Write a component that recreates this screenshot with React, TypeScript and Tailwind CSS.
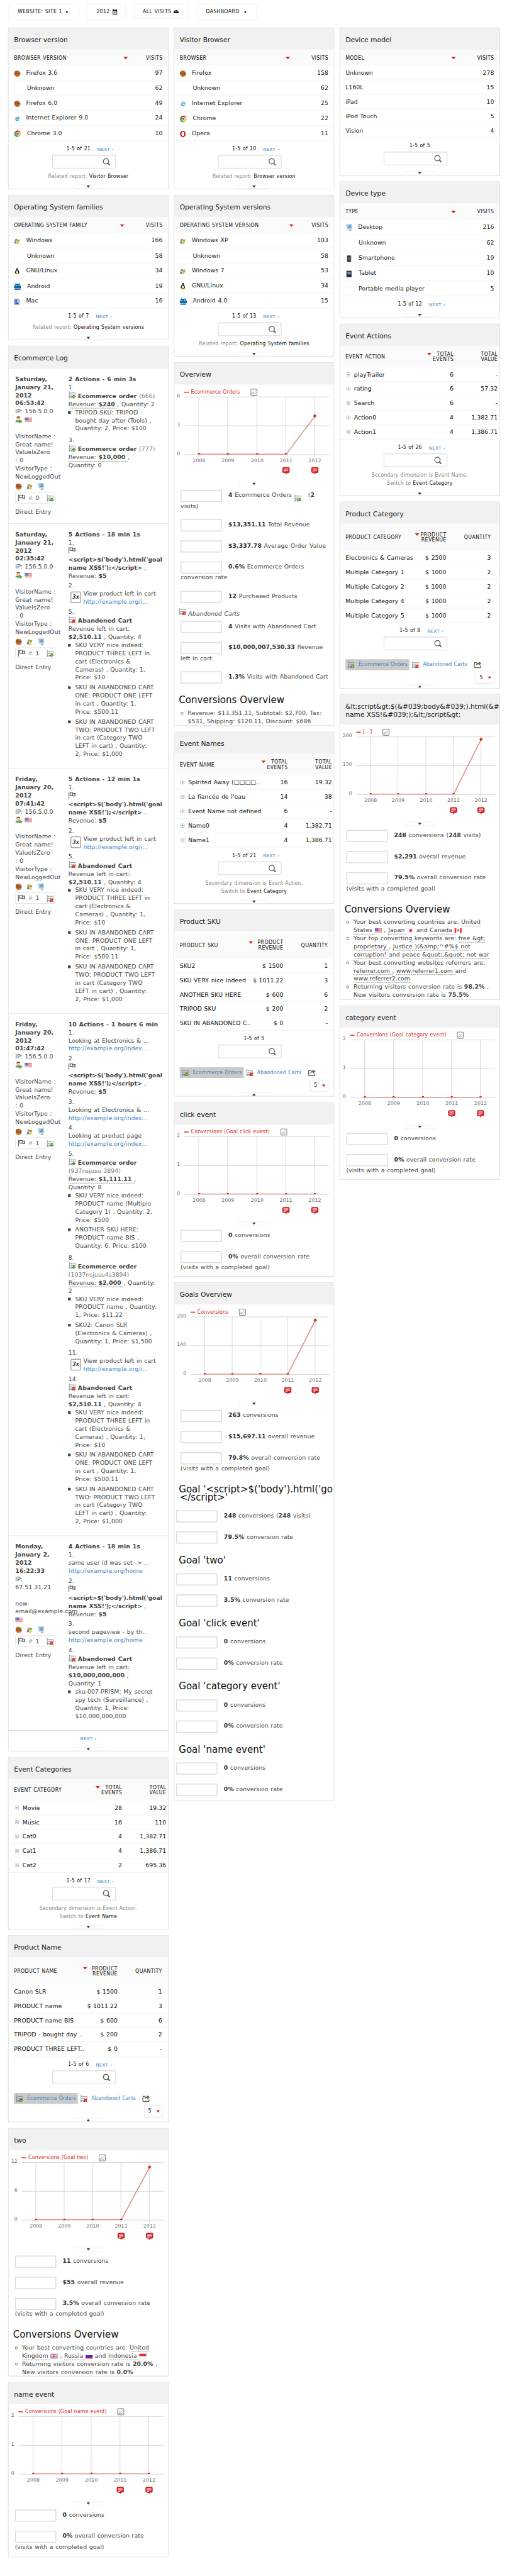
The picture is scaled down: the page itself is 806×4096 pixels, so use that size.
import React, { type ReactNode } from 'react';

/* ---------- small pictures ---------- */

type IconProps = { className?: string };

const Firefox = () => (
  <svg width="15" height="15" viewBox="0 0 16 16">
    <circle cx="8" cy="8" r="7.6" fill="#e0761c" />
    <path d="M8 .6a7.4 7.4 0 0 1 7.3 7c-1.600-3-3-4-5-4.500z" fill="#f7c04a" />
    <circle cx="8.200" cy="7" r="4.800" fill="#2f5f9e" />
    <path d="M6 3c2-1 4 .5 4 2.500-1 .5-2 0-3 1s0 2 1.500 2.300c2 .3 3-1 4.500-.8-1 4-6 5-8.500 2.500C2.500 8.500 3.500 5 6 3z" fill="#c65a12" />
    <path d="M8.500 3c1.500.5 2.500 1.500 2.700 3L9 6.500z" fill="#7fb6e6" />
    <path d="M1 6c.3-2 1.200-3.500 2-4.500.2 1 .5 1.500 1.500 2C3 5 3 8 4.500 10.500 2.500 10.200 1.300 8.500 1 6z" fill="#b5430f" />
  </svg>
);

const Explorer = () => (
  <svg width="15" height="15" viewBox="0 0 16 16">
    <path d="M8 3.300a5 5 0 1 0 4.800 6.700H10a2.400 2.400 0 0 1-4.300-1.200H13A5 5 0 0 0 8 3.300zM5.700 7.200a2.400 2.400 0 0 1 4.600 0z" fill="#35a8e8" />
    <path d="M2.500 15C.6 13.500 3.500 7 8 3.500 11 1.200 14 .4 14.500 1.800c.3.800 0 1.800-.5 2.800" fill="none" stroke="#f0c040" strokeWidth="1.100" />
  </svg>
);

const Chrome = () => (
  <svg width="16" height="16" viewBox="0 0 16 16">
    <path d="M8 8L1.500 4.300A7.500 7.500 0 0 1 14.500 4.300z" fill="#dd3a2c" />
    <path d="M8 8L14.500 4.300A7.500 7.500 0 0 1 8 15.500z" fill="#fbcf2b" />
    <path d="M8 8v7.500A7.500 7.500 0 0 1 1.500 4.300z" fill="#3aa648" />
    <path d="M8 4.500h6.600L8 8z" fill="#fbcf2b" />
    <circle cx="8" cy="8" r="3.700" fill="#fff" />
    <circle cx="8" cy="8" r="2.900" fill="#4a82d8" />
  </svg>
);

const Opera = () => (
  <svg width="14" height="15" viewBox="0 0 14 15">
    <ellipse cx="7" cy="7.500" rx="4.700" ry="5.600" fill="none" stroke="#c4161c" strokeWidth="3" />
    <ellipse cx="7" cy="7.500" rx="1.900" ry="4.800" fill="#fff" />
  </svg>
);

const Windows = () => (
  <svg width="14" height="14" viewBox="0 0 14 14">
    <path d="M3 2.200C4.500 1.200 6 1.400 7.300 2L6 6.800c-1.400-.6-2.900-.8-4.500 0z" fill="#d9703a" />
    <path d="M8.200 2.400c1.500.7 3 .8 4.800 0l-1.400 4.800c-1.600.8-3.200.7-4.700 0z" fill="#7fb43c" />
    <path d="M1.300 7.600c1.600-.8 3-.6 4.500 0l-1.400 4.700C3 11.700 1.600 11.500 0 12.300z" fill="#4a83c6" />
    <path d="M6.700 8c1.500.7 3 .8 4.700 0l-1.300 4.700c-1.700.8-3.200.7-4.700 0z" fill="#f0b92e" />
  </svg>
);

const Linux = () => (
  <svg width="14" height="15" viewBox="0 0 14 15">
    <path d="M7 .5c1.700 0 2.200 1.300 2.200 3 0 2 2.800 4 2.800 8L10 14H4L2 11.500c0-4 2.800-6 2.800-8 0-1.700.5-3 2.200-3z" fill="#111" />
    <path d="M7 5c1.300 1.500 2.400 3.800 2.200 7.500H4.800C4.600 8.800 5.700 6.500 7 5z" fill="#fff" />
    <path d="M5.800 3.600h2.400L7 5z" fill="#f5b921" />
    <path d="M1 12.500l2.500-1.800L5.500 14l-2 .8zM13 12.500l-2.500-1.800L8.500 14l2 .8z" fill="#f5b921" />
  </svg>
);

const Android = () => (
  <svg width="16" height="16" viewBox="0 0 16 16" fill="#0a6aa8">
    <path d="M3.500 0l1.500 2.300h6L12.500 0l.7.400-1.200 2.200C13.500 3.500 14.300 5 14.500 6.500H16V12h-1.500v4h-13v-4H0V6.500h1.500C1.700 5 2.500 3.500 4 2.600L2.800.4z" />
    <circle cx="5" cy="6" r="1.200" fill="#fff" />
    <circle cx="11" cy="6" r="1.200" fill="#fff" />
    <path d="M1.500 12.500h13v.8h-13z" fill="#fff" />
  </svg>
);

const Mac = () => (
  <svg width="14" height="14" viewBox="0 0 14 14">
    <path d="M0 0h14v14H0z" fill="#6f9bd8" />
    <path d="M8 0h6v14H8.500C7 11 7 9 7 8h-2C5.500 5 6.500 2 8 0z" fill="#bcd3f2" />
    <path d="M8.500 0C6.500 2.500 6 5 5.500 8H8c0 2 0 4 1 6M2.500 9.500c2.500 2.300 6.500 2.300 9 0M3.500 4v1.500M10.500 4v1.500" fill="none" stroke="#1d2f57" strokeWidth="1" />
  </svg>
);

const Desktop = () => (
  <svg width="16" height="18" viewBox="0 0 16 18">
    <path d="M1.500 1.500L13.500 0.800l1.200 9.200-10.500 2z" fill="#cfd6dc" stroke="#a9b2ba" strokeWidth=".7" />
    <path d="M3 3l9.300-.6.900 6.600-8.600 1.500z" fill="#5aa7e0" />
    <path d="M3 3l5-.3-3.400 7.600z" fill="#9fd0f4" />
    <path d="M8 12l5-1 1 3.500-4 2.500-3-1.500z" fill="#b9bfc5" />
  </svg>
);

const Phone = () => (
  <svg width="16" height="17" viewBox="0 0 16 17">
    <rect x="3" y=".5" width="10" height="16" rx="2" fill="#a8a8a8" />
    <rect x="4.200" y="1.800" width="7.600" height="13.400" rx="1" fill="#222" />
    <rect x="5.200" y="4" width="5.600" height="7.500" fill="#55606c" />
    <circle cx="8" cy="13.400" r="1" fill="#999" />
  </svg>
);

const Tablet = () => (
  <svg width="16" height="17" viewBox="0 0 16 17">
    <rect x="1.500" y=".5" width="13" height="16" rx="1.500" fill="#a9a9a9" />
    <rect x="3" y="2" width="10" height="12.500" fill="#1d222a" />
    <rect x="4.500" y="3.500" width="7" height="6" fill="#7d93b4" />
    <circle cx="8" cy="15.300" r=".8" fill="#fff" />
  </svg>
);

const Cart = ({ kind }: { kind: 'add' | 'drop' }) => (
  <svg width="16" height="16" viewBox="0 0 16 16" className="inline-block shrink-0">
    <path d="M.5.500h1.500v11M2 3.500h13.500l-1 5H2M1 12h10" fill="none" stroke="#7e8796" strokeWidth="1.100" />
    <path d="M4 5h9M4 7h8" stroke="#a9b2c2" strokeWidth="1" strokeDasharray="1 1" />
    <circle cx="2.500" cy="14" r="1.100" fill="none" stroke="#4a5467" />
    <circle cx="7.500" cy="14" r="1.100" fill="none" stroke="#4a5467" />
    {kind === 'add' ? (
      <>
        <path d="M10.400 8h3v2.400h2.400v3h-2.400v2.400h-3v-2.400H8v-3h2.400z" fill="#17620c" />
        <path d="M11.300 9h1.200v2.300h2.300v1.200h-2.300v2.300h-1.200v-2.300H9v-1.200h2.300z" fill="#c5ee1a" />
      </>
    ) : (
      <>
        <path d="M9 8l3 1.200L15 8l.8 1.500-1.300 2.500 1.300 2.500L15 16l-3-1.200L9 16l-.8-1.500L9.500 12 8.200 9.500z" fill="#c81e0e" />
        <path d="M9.800 9.500l4.600 5M14.400 9.500l-4.600 5" stroke="#ff7a4a" strokeWidth="1.300" />
      </>
    )}
  </svg>
);

const Returning = () => (
  <svg width="16" height="16" viewBox="0 0 16 16">
    <path d="M0 13.500C0 10 2 8.500 6 8.500s6 1.500 6 5z" fill="#6f8fae" />
    <path d="M4.500 8.500L6 12l1.500-3.500z" fill="#fff" />
    <circle cx="6.500" cy="4.800" r="3.800" fill="#f2c595" />
    <path d="M2.500 5C2 1 5 .3 7 .5c3 .2 4 2.500 3.300 5C9 3.500 6 3 4 3.500z" fill="#8a5426" />
    <path d="M5 10.500h5V8l5.500 4-5.500 4v-2.500H5z" fill="#63b53b" stroke="#3b8424" strokeWidth=".7" />
  </svg>
);

type Country = 'us' | 'jp' | 'ca' | 'uk' | 'ru' | 'id';

const Flag = ({ of }: { of: Country }) => (
  <svg width="16" height="11" viewBox="0 0 16 11" className="inline-block">
    <rect width="16" height="11" fill="#fff" />
    {of === 'us' && (
      <>
        <path d="M0 1h16M0 3h16M0 5h16M0 7h16M0 9h16" stroke="#e85a52" strokeWidth="1.100" />
        <rect width="8" height="6" fill="#4369c4" />
        <path d="M1 1.500h6M1 3h6M1 4.500h6" stroke="#fff" strokeWidth=".6" strokeDasharray="1 1" />
      </>
    )}
    {of === 'jp' && <circle cx="8" cy="5.500" r="3.200" fill="#e8202a" />}
    {of === 'ca' && (
      <>
        <path d="M0 0h4v11H0zM12 0h4v11h-4z" fill="#e2383c" />
        <path d="M8 2l1 1.500 1.500-.3-.5 2.300-1.500 1.300L8 9l-.5-2.200L6 5.500l-.5-2.300 1.500.3z" fill="#e2383c" />
      </>
    )}
    {of === 'uk' && (
      <>
        <rect width="16" height="11" fill="#4a62b4" />
        <path d="M0 0l16 11M16 0L0 11" stroke="#fff" strokeWidth="2" />
        <path d="M0 0l16 11M16 0L0 11" stroke="#e04048" strokeWidth=".7" />
        <path d="M8 0v11M0 5.500h16" stroke="#fff" strokeWidth="4" />
        <path d="M8 0v11M0 5.500h16" stroke="#e04048" strokeWidth="2" />
      </>
    )}
    {of === 'ru' && (
      <>
        <path d="M0 3.500h16v4H0z" fill="#1526e0" />
        <path d="M0 7.500h16V11H0z" fill="#e02020" />
      </>
    )}
    {of === 'id' && <path d="M0 0h16v5.500H0z" fill="#e03038" />}
    <rect x=".4" y=".4" width="15.200" height="10.200" fill="none" stroke="#00000026" strokeWidth=".8" />
  </svg>
);

const GoalFlag = () => (
  <svg width="16" height="15" viewBox="0 0 16 15" className="block">
    <path d="M1 0v15" stroke="#5e5e5e" strokeWidth="1.600" />
    <path d="M3.500 1.500h6v6h-6zM9.500 3h6l-1.700 2.700 1.700 2.800H9.500" fill="none" stroke="#5e5e5e" strokeWidth="1.700" />
  </svg>
);

const Lens = () => (
  <svg width="17" height="17" viewBox="0 0 17 17">
    <circle cx="7.300" cy="7.300" r="5.900" fill="none" stroke="#666" strokeWidth="2" />
    <path d="M11 11l5 5" stroke="#666" strokeWidth="3" />
  </svg>
);

const Share = () => (
  <svg width="17" height="15" viewBox="0 0 17 15">
    <path d="M7 2.500H3A1.800 1.800 0 0 0 1.200 4.300V12A1.800 1.800 0 0 0 3 13.800h10a1.800 1.800 0 0 0 1.800-1.800V9.500" fill="none" stroke="#666" strokeWidth="2.200" />
    <path d="M11 0l6 4.500L11 9V6.300C8 6.300 6.300 7.500 5 10c0-4.500 2.500-7.300 6-7.500z" fill="#666" />
  </svg>
);

const Expand = () => (
  <svg width="9" height="9" viewBox="0 0 9 9">
    <rect x=".5" y=".5" width="8" height="8" rx="1.300" fill="none" stroke="#a0a0a0" />
    <path d="M2 4.500h5M4.500 2v5" stroke="#8a8a8a" />
  </svg>
);

const Caret = ({ className = '' }: IconProps) => (
  <svg width="5" height="5" viewBox="0 0 5 5" className={className}>
    <path d="M0 0h5L2.500 5z" fill="#111" />
  </svg>
);

const Sort = () => (
  <svg width="10" height="6" viewBox="0 0 10 6" className="shrink-0">
    <path d="M0 0h10L5 6z" fill="#d4291f" />
  </svg>
);

const icons = {
  firefox: Firefox,
  explorer: Explorer,
  chrome: Chrome,
  opera: Opera,
  windows: Windows,
  linux: Linux,
  android: Android,
  mac: Mac,
  desktop: Desktop,
  phone: Phone,
  tablet: Tablet,
  none: () => null,
};
type IconName = keyof typeof icons;

/* ---------- building blocks ---------- */

const smallText = 'text-[11px] tracking-[0.18px] [word-spacing:0.6px]';
const capsText = 'text-[11px] tracking-[0.46px] [word-spacing:0.8px] uppercase';

function Card({ title, className, titleHeight = 'h-[48px]', children }: { title: ReactNode; className: string; titleHeight?: string; children: ReactNode }) {
  return (
    <section className={`${className} flex w-[356px] shrink-0 flex-col overflow-hidden border border-[#d9d9d9] bg-white shadow-[0_1px_2px_rgba(0,0,0,0.08)]`}>
      <h2 className={`${titleHeight} flex shrink-0 items-center whitespace-pre bg-[#f1f1f1] pt-[4px] pl-[12px] text-[15px] leading-[18px] tracking-[-0.06px] text-[#1a1a1a] [word-spacing:0px]`}>{title}</h2>
      {children}
    </section>
  );
}

function Tab({ up = false }: { up?: boolean }) {
  return (
    <div className="mx-auto flex h-[9px] w-[70px] shrink-0 items-center justify-center rounded-[2px] border border-[#efefef]">
      <svg width="8" height="5" viewBox="0 0 8 5">
        <path d={up ? 'M0 5h8L4 0z' : 'M0 0h8L4 5z'} fill="#333" />
      </svg>
    </div>
  );
}

function Pager({ label, next = true }: { label: string; next?: boolean }) {
  return (
    <div className={`${next ? 'pl-[8px]' : ''} flex h-[14px] shrink-0 items-center justify-center text-[11px] tracking-[0.3px] text-[#0d0d0d]`}>
      <span>{label}</span>
      {next && <span className="ml-[15px] text-[10px] tracking-[0.3px] text-[#3b83c6]">NEXT ›</span>}
    </div>
  );
}

function Search() {
  return (
    <div className="mt-[6px] ml-[97px] flex h-[30px] w-[141px] shrink-0 items-center justify-end rounded-[2px] border border-[#ccc] pr-[11px] shadow-[inset_0_1px_2px_rgba(0,0,0,0.09)]">
      <Lens />
    </div>
  );
}

function Related({ to }: { to: string }) {
  return (
    <p className="h-[18px] shrink-0 text-center text-[11px] leading-[18px] tracking-[0.25px] text-[#808080] [word-spacing:0.6px]">
      Related report: <span className="text-[#0d0d0d]">{to}</span>
    </p>
  );
}

function Secondary({ dim, to }: { dim: string; to: string }) {
  return (
    <p className={`${smallText} mt-[10px] mb-[9px] h-[36px] shrink-0 text-center leading-[18px] text-[#808080]`}>
      Secondary dimension is {dim}.
      <br />
      Switch to <span className="text-[#0d0d0d]">{to}</span>
    </p>
  );
}

type VisitRow = { icon?: IconName; label: string; value: string; h: string; gap?: string };

function VisitTable({ head, sortCell, rows }: { head: string; sortCell: string; rows: VisitRow[] }) {
  return (
    <>
      <div className={`${capsText} flex h-[36px] shrink-0 items-center bg-[#fafafa] pt-[2px] pr-[12px] pl-[12px] text-[#0d0d0d]`}>
        <span className="flex-1">{head}</span>
        <Sort />
        <span className={`${sortCell} text-right`}>Visits</span>
      </div>
      {rows.map((r) => {
        const Icon = r.icon ? icons[r.icon] : null;
        return (
          <div key={r.label} className={`${r.h} flex shrink-0 items-center border-b border-[#efefef] px-[12px] text-[13px] text-[#1a1a1a]`}>
            {Icon && (
              <span className={`${r.gap ?? 'w-[27px]'} shrink-0 pt-[3px]`}>
                <Icon />
              </span>
            )}
            <span className="flex-1">{r.label}</span>
            <span>{r.value}</span>
          </div>
        );
      })}
    </>
  );
}

type PairRow = [string, string, string];

function EventTable({ head, rows }: { head: string; rows: PairRow[] }) {
  return (
    <>
      <div className={`${capsText} flex h-[48px] shrink-0 items-center bg-[#fafafa] pt-[2px] pr-[4px] pl-[12px] leading-[12px] text-[#0d0d0d]`}>
        <span className="flex-1">{head}</span>
        <span className="-mt-[14px]"><Sort /></span>
        <span className="w-[49px] text-right">Total<br />Events</span>
        <span className="w-[98px] text-right">Total<br />Value</span>
      </div>
      {rows.map(([label, a, b]) => (
        <div key={label} className="flex h-[32px] shrink-0 items-center border-b border-[#efefef] pr-[4px] pl-[14px] text-[13px] text-[#0d0d0d]">
          <span className="w-[17px] shrink-0"><Expand /></span>
          <span className="min-w-0 flex-1 whitespace-nowrap">{label}</span>
          <span className="w-[49px] text-right">{a}</span>
          <span className="w-[98px] text-right">{b}</span>
        </div>
      ))}
    </>
  );
}

function ProductTable({ head, narrow = false, rows }: { head: string; narrow?: boolean; rows: PairRow[] }) {
  const pad = narrow ? 'pr-[19px]' : 'pr-[13px]';
  return (
    <>
      <div className={`${capsText} ${pad} flex h-[60px] shrink-0 items-center bg-[#fafafa] pt-[2px] pl-[12px] leading-[12px] text-[#0d0d0d]`}>
        <span className="flex-1 whitespace-nowrap">{head}</span>
        <span className="-mt-[14px]"><Sort /></span>
        <span className={`${narrow ? 'w-[60px]' : 'w-[67px]'} text-right`}>Product<br />Revenue</span>
        <span className="w-[99px] text-right">Quantity</span>
      </div>
      {rows.map(([label, a, b]) => (
        <div key={label} className={`${pad} flex h-[32px] shrink-0 items-center border-b border-[#efefef] pl-[12px] text-[13px] text-[#0d0d0d]`}>
          <span className="min-w-0 flex-1 whitespace-nowrap">{label}</span>
          <span className="text-right whitespace-nowrap">{a}</span>
          <span className="w-[99px] text-right">{b}</span>
        </div>
      ))}
    </>
  );
}

function ProductFooter({ label, next }: { label: string; next?: boolean }) {
  return (
    <>
      <div className="h-[11px] shrink-0" />
      <Pager label={label} next={next} />
      <Search />
      <div className={`${smallText} mt-[20px] ml-[12px] flex h-[24px] shrink-0 items-center whitespace-nowrap text-[#3b83c6]`}>
        <span className="flex h-[24px] w-[142px] items-center gap-[9px] rounded-[2px] bg-[#cacaca] pl-[4px]"><Cart kind="add" />Ecommerce Orders</span>
        <span className="flex w-[137px] items-center gap-[9px] pl-[5px]"><Cart kind="drop" />Abandoned Carts</span>
        <span className="pl-[6px]"><Share /></span>
      </div>
      <div className="mt-[4px] mr-[12px] flex h-[26px] w-[41px] shrink-0 items-center gap-[11px] self-end rounded-[2px] border border-[#dcdcdc] pl-[8px] text-[11px] text-[#0d0d0d]">
        5
        <svg width="8" height="6" viewBox="0 0 8 6"><path d="M0 0h8L4 6z" fill="#d4291f" /></svg>
      </div>
      <div className="h-[2px] shrink-0" />
      <Tab up />
    </>
  );
}

function Chart({ legend, scale, last, left }: { legend: string; scale: [string, string, string]; last: number; left: number }) {
  const right = 344;
  const step = (right - left) / 5;
  const xs = [0, 1, 2, 3, 4].map((i) => Math.round(left + step * (i + 0.5)));
  const years = ['2008', '2009', '2010', '2011', '2012'];
  const lastY = 155 - 128 * last;
  return (
    <div className="relative h-[234px] shrink-0">
      <svg width="354" height="210" viewBox="0 0 354 210" className="block">
        <g stroke="#c8c8c8" strokeWidth="1">
          <path d={`M${left} 27.500H${right}M${left} 91.500H${right}M${left} 155.500H${right}`} />
          {xs.map((x) => <path key={x} d={`M${x - 0.5} 27.500V161`} />)}
        </g>
        <path d={`M${xs[0]} 154.500H${xs[3]}`} stroke="#e05a52" strokeWidth="1.300" fill="none" />
        {last > 0 ? (
          <>
            <path d={`M${xs[3] + 1} 155.500L${xs[4] + 1} ${lastY + 1}`} stroke="#00000022" strokeWidth="1.500" fill="none" />
            <path d={`M${xs[3]} 154.500L${xs[4]} ${lastY}`} stroke="#d4291f" strokeWidth="1.100" fill="none" />
          </>
        ) : (
          <path d={`M${xs[3]} 154.500H${xs[4]}`} stroke="#e05a52" strokeWidth="1.300" fill="none" />
        )}
        {xs.slice(0, 4).map((x) => <path key={x} d={`M${x - 3} 155a3 3 0 0 1 6 0z`} fill="#d4291f" />)}
        {last > 0 ? <circle cx={xs[4]} cy={lastY} r="3.200" fill="#d4291f" /> : <path d={`M${xs[4] - 3} 155a3 3 0 0 1 6 0z`} fill="#d4291f" />}
        <g fill="#6b6b6b" fontSize="11">
          {scale.map((t, i) => <text key={t} x={left - 10} y={28.500 + 64 * i} textAnchor="end">{t}</text>)}
          {xs.map((x, i) => <text key={x} x={x} y="172" textAnchor="middle">{years[i]}</text>)}
        </g>
        {[xs[3], xs[4]].map((x) => (
          <g key={x} transform={`translate(${x - 8} 183.500)`}>
            <path d="M3 0h10a3 3 0 0 1 3 3v7a3 3 0 0 1-3 3h-3l-2 3-2-3H3a3 3 0 0 1-3-3V3a3 3 0 0 1 3-3z" fill="#cd2026" />
            <path d="M3 3.500h10M3 5.800h10M3 8h10M3 10.200h5" stroke="#fff" strokeWidth="1.100" />
          </g>
        ))}
      </svg>
      <div className={`${smallText} absolute top-[9px] flex h-[16px] items-center whitespace-nowrap text-[#d4291f]`} style={{ left: left - 1 }}>
        <span className="mr-[5px] h-[2px] w-[10px] bg-[#d4291f]" />
        {legend}
        <svg width="16" height="16" viewBox="0 0 16 16" className="ml-[23px]">
          <rect x="1" y="1" width="14" height="14" rx="2" fill="#fff" stroke="#7d7d7d" strokeWidth="1.500" />
          <path d="M2.500 11.500l3.500-4 2 1.500 5.500-6M2.500 13l4-2.500 3 2L13.500 8" fill="none" stroke="#8a8a8a" strokeWidth="1" />
        </svg>
      </div>
      <div className="mt-[6px]"><Tab /></div>
    </div>
  );
}

function Stat({ value, text, extra, wrap, inset = 'pl-[14px]' }: { value: string; text: ReactNode; extra?: ReactNode; wrap?: string; inset?: string }) {
  return (
    <div className={`${wrap ? 'h-[65px]' : 'h-[47px]'} ${inset} shrink-0 text-[13px] whitespace-nowrap text-[#444]`}>
      <div className="flex h-[27px]">
        <span className="mr-[14px] h-[27px] w-[92px] shrink-0 rounded-[2px] border-2 border-[#dcdcdc]" />
        <span className="h-[24px] leading-[23px]"><b className="text-[#333]">{value}</b> {text}{extra}</span>
      </div>
      {wrap && <div className="h-[18px] leading-[17px]">{wrap}</div>}
    </div>
  );
}

const Heading = ({ children }: { children: ReactNode }) => (
  <h3 className="mt-[8px] mb-[20px] ml-[10px] shrink-0 text-[21px] leading-[18px] tracking-[0px] whitespace-nowrap text-[#0d0d0d] [word-spacing:0px]">{children}</h3>
);

const Bullets = ({ items }: { items: ReactNode[][] }) => (
  <div className="-mt-[9px] shrink-0 text-[13px] leading-[18px] whitespace-nowrap text-[#444]">
    {items.map((lines, i) => (
      <div key={i} className="flex">
        <span className="mt-[6px] mr-[10px] ml-[14px] h-[6px] w-[6px] shrink-0 rounded-full border border-[#444]" />
        <div>{lines.map((l, j) => <div key={j} className="h-[18px]">{l}</div>)}</div>
      </div>
    ))}
  </div>
);

const U = ({ children }: { children: ReactNode }) => <span className="border-b border-dotted border-[#444] pb-[1px]">{children}</span>;

/* ---------- visit log ---------- */

const Line = ({ children, className = '' }: { children: ReactNode; className?: string }) => <div className={`h-[18px] ${className}`}>{children}</div>;

const Action = ({ n, children }: { n: string; children: ReactNode }) => (
  <div className="pb-[4px]">
    <Line>{n}</Line>
    {children}
  </div>
);

const OrderHead = ({ kind, title, id }: { kind: 'add' | 'drop'; title: string; id?: string }) => (
  <div className="flex h-[20px] items-start gap-[5px]">
    <Cart kind={kind} />
    <span className="pt-[2px]"><b>{title}</b>{id && <span className="text-[#777]"> {id}</span>}</span>
  </div>
);

const Items = ({ items }: { items: string[][] }) => (
  <>
    {items.map((lines) => (
      <div key={lines.join()} className="-ml-[1px] flex pb-[4px]">
        <span className="mt-[6px] mr-[10px] h-[6px] w-[6px] shrink-0 rounded-[1px] bg-[#444]" />
        <div>{lines.map((l) => <Line key={l}>{l}</Line>)}</div>
      </div>
    ))}
  </>
);

const GoalAction = ({ n }: { n: string }) => (
  <Action n={n}>
    <div className="h-[20px] pt-[1px]"><GoalFlag /></div>
    <Line className="font-bold tracking-[0px]">&lt;script&gt;$('body').html('goal</Line>
    <Line><b className="tracking-[0px]">name XSS!');&lt;/script&gt;</b> ,</Line>
    <Line>Revenue: <b>$5</b></Line>
  </Action>
);

const ViewAction = ({ n }: { n: string }) => (
  <Action n={n}>
    <div className="flex">
      <span className="mt-[4px] mr-[5px] ml-[5px] flex h-[25px] w-[23px] items-center justify-center rounded-[3px] border border-[#444] text-[11px] font-bold italic">3x</span>
      <div>
        <Line>View product left in cart</Line>
        <Line className="text-[#3b83c6]">http://example.org/i...</Line>
      </div>
    </div>
  </Action>
);

const PageAction = ({ n, title, url }: { n: string; title: string; url: string }) => (
  <Action n={n}>
    <Line>{title}</Line>
    <Line className="text-[#3b83c6]">{url}</Line>
  </Action>
);

const AbandonedAction = ({ n }: { n: string }) => (
  <Action n={n}>
    <OrderHead kind="drop" title="Abandoned Cart" />
    <Line>Revenue left in cart:</Line>
    <Line><b>$2,510.11</b> , Quantity: 4</Line>
    <Items
      items={[
        ['SKU VERY nice indeed:', 'PRODUCT THREE LEFT in', 'cart (Electronics &', 'Cameras) , Quantity: 1,', 'Price: $10'],
        ['SKU IN ABANDONED CART', 'ONE: PRODUCT ONE LEFT', 'in cart , Quantity: 1,', 'Price: $500.11'],
        ['SKU IN ABANDONED CART', 'TWO: PRODUCT TWO LEFT', 'in cart (Category TWO', 'LEFT in cart) , Quantity:', '2, Price: $1,000'],
      ]}
    />
  </Action>
);

function VisitorTail({ count, kind }: { count: string; kind: 'add' | 'drop' }) {
  return (
    <>
      <div className="flex h-[25px] items-center gap-[10px]"><Firefox /><Windows /><Desktop /></div>
      <div className="flex h-[25px] w-[89px] items-center rounded-[3px] border border-[#d6d6d6] pl-[5px]">
        <GoalFlag />
        <span className="ml-[6px] text-[#aaa]">#</span>
        <span className="ml-[6px] w-[24px]">{count}</span>
        <Cart kind={kind} />
      </div>
      <Line className="mt-[10px]">Direct Entry</Line>
    </>
  );
}

function Visit({ className, date, title, count, kind, known, children }: { className: string; date: string[]; title: string; count: string; kind: 'add' | 'drop'; known?: boolean; children: ReactNode }) {
  return (
    <div className={`${className} flex shrink-0 border-t border-[#e2e2e2] pt-[15px] pl-[15px] text-[13px] leading-[18px] whitespace-nowrap text-[#444]`}>
      <div className="w-[118px] shrink-0">
        {date.map((d) => <Line key={d} className="font-bold">{d}</Line>)}
        {known ? (
          <>
            <Line>IP:</Line>
            <Line>67.51.31.21</Line>
            <Line className="mt-[18px]">new-</Line>
            <Line>email@example.com</Line>
            <div className="flex h-[19px] items-center"><Flag of="us" /></div>
          </>
        ) : (
          <>
            <Line>IP: 156.5.0.0</Line>
            <div className="mb-[19px] flex h-[18px] items-center gap-[5px]"><Returning /><Flag of="us" /></div>
            {['VisitorName :', 'Great name!', 'ValueIsZero', ': 0', 'VisitorType :', 'NewLoggedOut'].map((t) => <Line key={t}>{t}</Line>)}
          </>
        )}
        <VisitorTail count={count} kind={kind} />
      </div>
      <div>
        <Line className="font-bold">{title}</Line>
        {children}
      </div>
    </div>
  );
}

/* ---------- page ---------- */

function TopBar() {
  const box = 'flex items-center border border-[#efefef] pt-[3px] whitespace-nowrap text-[#0d0d0d]';
  return (
    <nav className={`${capsText} flex h-[61px] items-start gap-[18px] pt-[8px] pl-[18px]`}>
      <div className={`${box} h-[35px] w-[158px] pl-[20px]`}>Website: Site 1<Caret className="ml-[8px]" /></div>
      <div className={`${box} h-[35px] w-[85px] pl-[19px]`}>
        2012
        <svg width="12" height="12" viewBox="0 0 12 12" className="-mt-[2px] ml-[5px]">
          <path d="M1 1.500h10V12H1z" fill="#111" />
          <path d="M3 0v3M9 0v3" stroke="#111" strokeWidth="1.600" />
          <path d="M2.200 4h7.600v6.800H2.200z" fill="#fff" />
          <path d="M3.200 5.500h5.600M3.200 7.500h5.600M3.200 9.400h5.600" stroke="#111" strokeWidth="1.100" strokeDasharray="1.300 .8" />
        </svg>
      </div>
      <div className={`${box} h-[33px] w-[122px] pl-[19px]`}>
        All visits
        <svg width="12" height="8" viewBox="0 0 12 8" fill="#111" className="ml-[5px]">
          <circle cx="6" cy="2" r="2" /><circle cx="2.500" cy="3" r="1.500" /><circle cx="9.500" cy="3" r="1.500" />
          <path d="M0 7.500c0-2.500 1-3.300 2.500-3.300h7c1.500 0 2.500.8 2.500 3.300z" />
        </svg>
      </div>
      <div className={`${box} h-[35px] w-[133px] pl-[19px]`}>Dashboard<Caret className="ml-[10px]" /></div>
    </nav>
  );
}

function ColumnOne() {
  return (
    <div className="flex flex-col gap-[13px]">
      <Card title="Browser version" className="h-[359px]">
        <VisitTable head="Browser version" sortCell="w-[77px]" rows={[
          { icon: 'firefox', label: 'Firefox 3.6', value: '97', h: 'h-[33px]' },
          { icon: 'none', label: 'Unknown', value: '62', h: 'h-[34px]', gap: 'w-[29px]' },
          { icon: 'firefox', label: 'Firefox 6.0', value: '49', h: 'h-[33px]' },
          { icon: 'explorer', label: 'Internet Explorer 9.0', value: '24', h: 'h-[33px]' },
          { icon: 'chrome', label: 'Chrome 3.0', value: '10', h: 'h-[34px]', gap: 'w-[29px]' },
        ]} />
        <div className="h-[11px] shrink-0" />
        <Pager label="1-5 of 21" />
        <Search />
        <div className="h-[9px] shrink-0" />
        <Related to="Visitor Browser" />
        <div className="h-[9px] shrink-0" />
        <Tab />
      </Card>
      <Card title="Operating System families" className="h-[322px]">
        <VisitTable head="Operating System family" sortCell="w-[85px]" rows={[
          { icon: 'windows', label: 'Windows', value: '166', h: 'h-[33px]' },
          { icon: 'none', label: 'Unknown', value: '58', h: 'h-[34px]', gap: 'w-[29px]' },
          { icon: 'linux', label: 'GNU/Linux', value: '34', h: 'h-[33px]' },
          { icon: 'android', label: 'Android', value: '19', h: 'h-[34px]', gap: 'w-[29px]' },
          { icon: 'mac', label: 'Mac', value: '16', h: 'h-[33px]' },
        ]} />
        <div className="h-[11px] shrink-0" />
        <Pager label="1-5 of 7" />
        <div className="h-[8px] shrink-0" />
        <Related to="Operating System versions" />
        <div className="h-[10px] shrink-0" />
        <Tab />
      </Card>
      <Card title="Ecommerce Log" className="h-[3121px]">
        <Visit className="h-[345px]" date={['Saturday,', 'January 21,', '2012', '06:53:42']} title="2 Actions - 6 min 3s" count="0" kind="add">
          <Action n="1.">
            <OrderHead kind="add" title="Ecommerce order" id="(666)" />
            <Line><U>Revenue: <b>$240</b> </U>, Quantity: 2</Line>
            <Items items={[['TRIPOD SKU: TRIPOD -', 'bought day after (Tools) ,', 'Quantity: 2, Price: $100']]} />
          </Action>
          <Action n="3.">
            <OrderHead kind="add" title="Ecommerce order" id="(777)" />
            <Line><U>Revenue: <b>$10,000</b> </U>,</Line>
            <Line>Quantity: 0</Line>
          </Action>
        </Visit>
        <Visit className="h-[544px]" date={['Saturday,', 'January 21,', '2012', '02:35:42']} title="5 Actions - 18 min 1s" count="1" kind="add">
          <GoalAction n="1." />
          <ViewAction n="2." />
          <AbandonedAction n="5." />
        </Visit>
        <Visit className="h-[544px]" date={['Friday,', 'January 20,', '2012', '07:41:42']} title="5 Actions - 12 min 1s" count="1" kind="drop">
          <GoalAction n="1." />
          <ViewAction n="2." />
          <AbandonedAction n="5." />
        </Visit>
        <Visit className="h-[1160px]" date={['Friday,', 'January 20,', '2012', '01:47:42']} title="10 Actions - 1 hours 6 min" count="1" kind="add">
          <PageAction n="1." title="Looking at Electronics & ..." url="http://example.org/index..." />
          <GoalAction n="2." />
          <PageAction n="3." title="Looking at Electronics & ..." url="http://example.org/index..." />
          <PageAction n="4." title="Looking at product page" url="http://example.org/index..." />
          <Action n="5.">
            <OrderHead kind="add" title="Ecommerce order" />
            <Line className="text-[#777]">(937nsjusu 3894)</Line>
            <Line><U>Revenue: <b>$1,111.11</b> </U>,</Line>
            <Line>Quantity: 8</Line>
            <Items items={[['SKU VERY nice indeed:', 'PRODUCT name (Multiple', 'Category 1) , Quantity: 2,', 'Price: $500'], ['ANOTHER SKU HERE:', 'PRODUCT name BIS ,', 'Quantity: 6, Price: $100']]} />
          </Action>
          <Action n="8.">
            <OrderHead kind="add" title="Ecommerce order" />
            <Line className="text-[#777]">(1037nsjusu4s3894)</Line>
            <Line><U>Revenue: <b>$2,000</b> </U>, Quantity:</Line>
            <Line>2</Line>
            <Items items={[['SKU VERY nice indeed:', 'PRODUCT name , Quantity:', '1, Price: $11.22'], ['SKU2: Canon SLR', '(Electronics & Cameras) ,', 'Quantity: 1, Price: $1,500']]} />
          </Action>
          <ViewAction n="11." />
          <AbandonedAction n="14." />
        </Visit>
        <Visit className="h-[432px]" date={['Monday,', 'January 2,', '2012', '16:22:33']} title="4 Actions - 18 min 1s" count="1" kind="drop" known>
          <PageAction n="1." title="same user id was set -> .." url="http://example.org/home" />
          <GoalAction n="2." />
          <PageAction n="3." title="second pageview - by th.." url="http://example.org/home" />
          <Action n="4.">
            <OrderHead kind="drop" title="Abandoned Cart" />
            <Line>Revenue left in cart:</Line>
            <Line><b>$10,000,000,000</b> ,</Line>
            <Line>Quantity: 1</Line>
            <Items items={[['sku-007-PRISM: My secret', 'spy tech (Surveillance) ,', 'Quantity: 1, Price:', '$10,000,000,000']]} />
          </Action>
        </Visit>
        <div className="flex h-[37px] shrink-0 items-center justify-center border-t border-[#c4c4c4] text-[10px] tracking-[0.3px] text-[#3b83c6] shadow-[0_-1px_2px_rgba(0,0,0,0.12)]">NEXT ›</div>
        <div className="h-[1px] shrink-0" />
        <Tab />
      </Card>
      <Card title="Event Categories" className="h-[383px]">
        <EventTable head="Event Category" rows={[['Movie', '28', '19.32'], ['Music', '16', '110'], ['Cat0', '4', '1,382.71'], ['Cat1', '4', '1,386.71'], ['Cat2', '2', '695.36']]} />
        <div className="h-[11px] shrink-0" />
        <Pager label="1-5 of 17" />
        <Search />
        <Secondary dim="Event Action" to="Event Name" />
        <Tab />
      </Card>
      <Card title="Product Name" className="h-[415px]">
        <ProductTable head="Product Name" rows={[['Canon SLR', '$ 1500', '1'], ['PRODUCT name', '$ 1011.22', '3'], ['PRODUCT name BIS', '$ 600', '6'], ['TRIPOD - bought day ..', '$ 200', '2'], ['PRODUCT THREE LEFT..', '$ 0', '-']]} />
        <ProductFooter label="1-5 of 6" />
      </Card>
      <Card title="two" className="h-[551px]">
        <Chart legend="Conversions (Goal two)" scale={['12', '6', '0']} last={11 / 12} left={30} />
        <Stat value="11" text="conversions" />
        <Stat value="$55" text="overall revenue" />
        <Stat value="3.5%" text="overall conversion rate" wrap="(visits with a completed goal)" />
        <Heading>Conversions Overview</Heading>
        <Bullets items={[
          [<>Your best converting countries are: <U>United</U></>, <><U>Kingdom </U><Flag of="uk" /> , <U>Russia </U><Flag of="ru" /> and <U>Indonesia </U><Flag of="id" /></>],
          [<>Returning visitors conversion rate is <b>20.0%</b> ,</>, <>New visitors conversion rate is <b>0.0%</b></>],
        ]} />
      </Card>
      <Card title="name event" className="h-[387px]">
        <Chart legend="Conversions (Goal name event)" scale={['2', '1', '0']} last={0} left={23} />
        <Stat value="0" text="conversions" />
        <Stat value="0%" text="overall conversion rate" wrap="(visits with a completed goal)" />
      </Card>
    </div>
  );
}

function ColumnTwo() {
  return (
    <div className="flex flex-col gap-[13px]">
      <Card title="Visitor Browser" className="h-[359px]">
        <VisitTable head="Browser" sortCell="w-[85px]" rows={[
          { icon: 'firefox', label: 'Firefox', value: '158', h: 'h-[33px]' },
          { icon: 'none', label: 'Unknown', value: '62', h: 'h-[34px]', gap: 'w-[29px]' },
          { icon: 'explorer', label: 'Internet Explorer', value: '25', h: 'h-[33px]' },
          { icon: 'chrome', label: 'Chrome', value: '22', h: 'h-[34px]', gap: 'w-[29px]' },
          { icon: 'opera', label: 'Opera', value: '11', h: 'h-[33px]' },
        ]} />
        <div className="h-[11px] shrink-0" />
        <Pager label="1-5 of 10" />
        <Search />
        <div className="h-[9px] shrink-0" />
        <Related to="Browser version" />
        <div className="h-[9px] shrink-0" />
        <Tab />
      </Card>
      <Card title="Operating System versions" className="h-[359px]">
        <VisitTable head="Operating System version" sortCell="w-[77px]" rows={[
          { icon: 'windows', label: 'Windows XP', value: '103', h: 'h-[33px]' },
          { icon: 'none', label: 'Unknown', value: '58', h: 'h-[34px]', gap: 'w-[29px]' },
          { icon: 'windows', label: 'Windows 7', value: '53', h: 'h-[33px]' },
          { icon: 'linux', label: 'GNU/Linux', value: '34', h: 'h-[33px]' },
          { icon: 'android', label: 'Android 4.0', value: '15', h: 'h-[34px]', gap: 'w-[29px]' },
        ]} />
        <div className="h-[11px] shrink-0" />
        <Pager label="1-5 of 13" />
        <Search />
        <div className="h-[9px] shrink-0" />
        <Related to="Operating System families" />
        <div className="h-[9px] shrink-0" />
        <Tab />
      </Card>
      <Card title="Overview" className="h-[807px]">
        <Chart legend="Ecommerce Orders" scale={['6', '3', '0']} last={4 / 6} left={23} />
        <Stat value="4" text={<>Ecommerce Orders <span className="inline-block align-[-5px] leading-none"><Cart kind="add" /></span></>} extra={<span className="pl-[15px]">(<b>2</b></span>} wrap="visits)" />
        <Stat value="$13,351.11" text="Total Revenue" />
        <Stat value="$3,337.78" text="Average Order Value" />
        <Stat value="0.6%" text="Ecommerce Orders" wrap="conversion rate" />
        <Stat value="12" text="Purchased Products" />
        <div className="-mt-[9px] flex h-[29px] shrink-0 items-start gap-[5px] pl-[10px] text-[13px] text-[#444] italic"><Cart kind="drop" /><span className="pt-[4px]">Abandoned Carts</span></div>
        <Stat value="4" text="Visits with Abandoned Cart" />
        <Stat value="$10,000,007,530.33" text="Revenue" wrap="left in cart" />
        <Stat value="1.3%" text="Visits with Abandoned Cart" />
        <Heading>Conversions Overview</Heading>
        <Bullets items={[['Revenue: $13,351.11, Subtotal: $2,700, Tax:', '$531, Shipping: $120.11, Discount: $686']]} />
      </Card>
      <Card title="Event Names" className="h-[382px]">
        <EventTable head="Event Name" rows={[['Spirited Away (□□□□..', '16', '19.32'], ["La fiancée de l'eau", '14', '38'], ['Event Name not defined', '6', '-'], ['Name0', '4', '1,382.71'], ['Name1', '4', '1,386.71']]} />
        <div className="h-[11px] shrink-0" />
        <Pager label="1-5 of 21" />
        <Search />
        <Secondary dim="Event Action" to="Event Category" />
        <Tab />
      </Card>
      <Card title="Product SKU" className="h-[415px]">
        <ProductTable head="Product SKU" rows={[['SKU2', '$ 1500', '1'], ['SKU VERY nice indeed', '$ 1011.22', '3'], ['ANOTHER SKU HERE', '$ 600', '6'], ['TRIPOD SKU', '$ 200', '2'], ['SKU IN ABANDONED C..', '$ 0', '-']]} />
        <ProductFooter label="1-5 of 5" next={false} />
      </Card>
      <Card title="click event" className="h-[387px]">
        <Chart legend="Conversions (Goal click event)" scale={['2', '1', '0']} last={0} left={23} />
        <Stat value="0" text="conversions" />
        <Stat value="0%" text="overall conversion rate" wrap="(visits with a completed goal)" />
      </Card>
      <Card title="Goals Overview" className="h-[1152px]">
        <Chart legend="Conversions" scale={['280', '140', '0']} last={263 / 280} left={37} />
        <Stat value="263" text="conversions" />
        <Stat value="$15,697.11" text="overall revenue" />
        <Stat value="79.8%" text="overall conversion rate" wrap="(visits with a completed goal)" />
        <Heading>Goal '&lt;script&gt;$('body').html('go<br /><span className="pl-[2px]">&lt;/script&gt;'</span></Heading>
        <Stat inset="pl-[4px]" value="248" text="conversions (" extra={<><b>248</b> visits)</>} />
        <Stat inset="pl-[4px]" value="79.5%" text="conversion rate" />
        <Heading>Goal 'two'</Heading>
        <Stat inset="pl-[4px]" value="11" text="conversions" />
        <Stat inset="pl-[4px]" value="3.5%" text="conversion rate" />
        {['click event', 'category event', 'name event'].map((g) => (
          <React.Fragment key={g}>
            <Heading>Goal '{g}'</Heading>
            <Stat inset="pl-[4px]" value="0" text="conversions" />
            <Stat inset="pl-[4px]" value="0%" text="conversion rate" />
          </React.Fragment>
        ))}
      </Card>
    </div>
  );
}

function ColumnThree() {
  return (
    <div className="flex flex-col gap-[13px]">
      <Card title="Device model" className="h-[329px]">
        <VisitTable head="Model" sortCell="w-[85px]" rows={[
          { label: 'Unknown', value: '278', h: 'h-[32px]' },
          { label: 'L160L', value: '15', h: 'h-[32px]' },
          { label: 'iPad', value: '10', h: 'h-[32px]' },
          { label: 'iPod Touch', value: '5', h: 'h-[32px]' },
          { label: 'Vision', value: '4', h: 'h-[32px]' },
        ]} />
        <div className="h-[11px] shrink-0" />
        <Pager label="1-5 of 5" next={false} />
        <Search />
        <div className="h-[13px] shrink-0" />
        <Tab />
      </Card>
      <Card title="Device type" className="h-[303px]">
        <VisitTable head="Type" sortCell="w-[85px]" rows={[
          { icon: 'desktop', label: 'Desktop', value: '216', h: 'h-[34px]', gap: 'w-[28px]' },
          { icon: 'none', label: 'Unknown', value: '62', h: 'h-[34px]', gap: 'w-[29px]' },
          { icon: 'phone', label: 'Smartphone', value: '19', h: 'h-[34px]', gap: 'w-[29px]' },
          { icon: 'tablet', label: 'Tablet', value: '10', h: 'h-[34px]', gap: 'w-[29px]' },
          { icon: 'none', label: 'Portable media player', value: '5', h: 'h-[34px]', gap: 'w-[29px]' },
        ]} />
        <div className="h-[11px] shrink-0" />
        <Pager label="1-5 of 12" />
        <div className="h-[12px] shrink-0" />
        <Tab />
      </Card>
      <Card title="Event Actions" className="h-[382px]">
        <EventTable head="Event Action" rows={[['playTrailer', '6', '-'], ['rating', '6', '57.32'], ['Search', '6', '-'], ['Action0', '4', '1,382.71'], ['Action1', '4', '1,386.71']]} />
        <div className="h-[11px] shrink-0" />
        <Pager label="1-5 of 26" />
        <Search />
        <Secondary dim="Event Name" to="Event Category" />
        <Tab />
      </Card>
      <Card title="Product Category" className="h-[415px]">
        <ProductTable narrow head="Product Category" rows={[['Electronics & Cameras', '$ 2500', '3'], ['Multiple Category 1', '$ 1000', '2'], ['Multiple Category 2', '$ 1000', '2'], ['Multiple Category 4', '$ 1000', '2'], ['Multiple Category 5', '$ 1000', '2']]} />
        <ProductFooter label="1-5 of 8" />
      </Card>
      <Card
        className="h-[678px]"
        titleHeight="h-[66px]"
        title={<span>{"&lt;script&gt;$(&#039;body&#039;).html(&#039;goal"}<br />{"name XSS!&#039;);&lt;/script&gt;"}</span>}
      >
        <Chart legend="[...]" scale={['260', '130', '0']} last={248 / 260} left={37} />
        <Stat value="248" text="conversions (" extra={<><b>248</b> visits)</>} />
        <Stat value="$2,291" text="overall revenue" />
        <Stat value="79.5%" text="overall conversion rate" wrap="(visits with a completed goal)" />
        <Heading>Conversions Overview</Heading>
        <Bullets items={[
          [<>Your best converting countries are: <U>United</U></>, <><U>States </U><Flag of="us" /> , <U>Japan </U><Flag of="jp" /> and <U>Canada </U><Flag of="ca" /></>],
          [<>Your top converting keywords are: <U>{'free &gt;'}</U></>, <><U>proprietary </U>, <U>{'justice )(&amp;^#%$ not'}</U></>, <><U>corruption! </U>and <U>{'peace &quot;,&quot; not war'}</U></>],
          ['Your best converting websites referrers are:', <><U>referrer.com </U>, <U>www.referrer1.com </U>and</>, <U>www.referrer2.com</U>],
          [<>Returning visitors conversion rate is <b>98.2%</b> ,</>, <>New visitors conversion rate is <b>75.5%</b></>],
        ]} />
      </Card>
      <Card title="category event" className="h-[387px]">
        <Chart legend="Conversions (Goal category event)" scale={['2', '1', '0']} last={0} left={23} />
        <Stat value="0" text="conversions" />
        <Stat value="0%" text="overall conversion rate" wrap="(visits with a completed goal)" />
      </Card>
    </div>
  );
}

export default function App() {
  return (
    <div className="h-[4096px] w-[806px] overflow-hidden bg-white">
      <div className="h-[5719px] w-[1126px] origin-top-left scale-[0.716] bg-white font-['DejaVu_Sans',sans-serif] tracking-[0.08px] [word-spacing:0.8px]">
        <TopBar />
        <main className="flex items-start gap-[12px] pl-[18px]">
          <ColumnOne />
          <ColumnTwo />
          <ColumnThree />
        </main>
      </div>
    </div>
  );
}
